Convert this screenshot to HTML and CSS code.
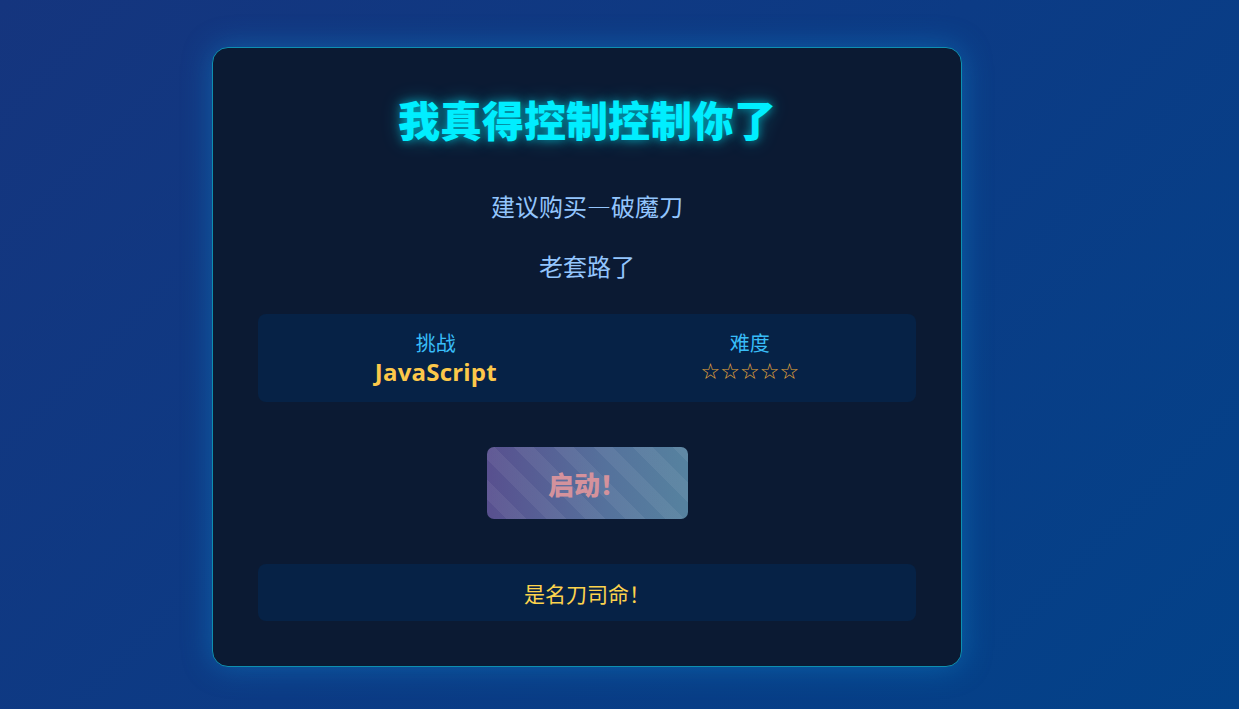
FILE: index.html
```html
<!DOCTYPE html>
<html lang="zh-CN">
<head>
<meta charset="UTF-8">
<title>我真得控制控制你了</title>
<link rel="stylesheet" href="styles.css">
</head>
<body>
<main class="card">
  <h1 class="title">我真得控制控制你了</h1>
  <p class="line line-first">建议购买—破魔刀</p>
  <p class="line">老套路了</p>
  <section class="stats">
    <div class="stat">
      <div class="stat-label">挑战</div>
      <div class="stat-value">JavaScript</div>
    </div>
    <div class="stat">
      <div class="stat-label">难度</div>
      <div class="stat-stars">☆☆☆☆☆</div>
    </div>
  </section>
  <div class="action">
    <button class="start" disabled>启动！</button>
  </div>
  <div class="result">是名刀司命！</div>
</main>
</body>
</html>
```

FILE: styles.css
```css
* { box-sizing: border-box; }
html, body { height: 100%; }
body {
  margin: 0;
  background: linear-gradient(135deg, #15357e 0%, #0c3b85 50%, #034289 100%);
  font-family: "Noto Sans CJK SC", "Noto Sans", sans-serif;
  padding: 47px 0 0 212px;
}
.card {
  width: 750px;
  height: 620px;
  background: #0b1a33;
  border: 1px solid #0e8fb0;
  border-radius: 16px;
  padding: 46px 45px 44px;
  box-shadow: 0 0 30px rgba(14, 165, 233, 0.35);
  text-align: center;
}
.title {
  margin: 0;
  font-size: 42px;
  line-height: 50px;
  font-weight: 900;
  color: #00eeff;
  text-shadow: 0 0 10px rgba(0, 238, 255, 0.6), 0 0 20px rgba(0, 238, 255, 0.3);
}
.line {
  margin: 24px 0 0;
  font-size: 24px;
  line-height: 36px;
  color: #93c5fd;
}
.line-first { margin-top: 44px; }
.stats {
  margin-top: 30px;
  height: 88px;
  background: #062246;
  border-radius: 8px;
  padding: 15px;
  display: flex;
  justify-content: space-around;
}
.stat-label {
  font-size: 20px;
  line-height: 28px;
  color: #38bdf8;
}
.stat-value {
  font-size: 24px;
  line-height: 30px;
  font-weight: 700;
  color: #fcc84a;
  font-family: "Open Sans", "Noto Sans", sans-serif;
  letter-spacing: 0.2px;
}
.stat-stars {
  font-size: 22px;
  line-height: 30px;
  color: #eaa83a;
  font-family: "DejaVu Sans", sans-serif;
}
.action {
  margin-top: 45px;
  display: flex;
  justify-content: center;
}
.start {
  width: 201px;
  height: 72px;
  border: none;
  border-radius: 7px;
  font-family: "Noto Sans CJK SC", sans-serif;
  font-size: 26px;
  font-weight: 900;
  color: #d4929c;
  padding: 0;
  background:
    repeating-linear-gradient(45deg, rgba(255,255,255,0.0) 0 14px, rgba(255,255,255,0.06) 14px 28px),
    linear-gradient(90deg, #58508f, #55729c 60%, #56829f);
}
.result {
  margin-top: 45px;
  height: 57px;
  background: #062246;
  border-radius: 8px;
  font-size: 21px;
  line-height: 58px;
  color: #fcd34d;
}
```
